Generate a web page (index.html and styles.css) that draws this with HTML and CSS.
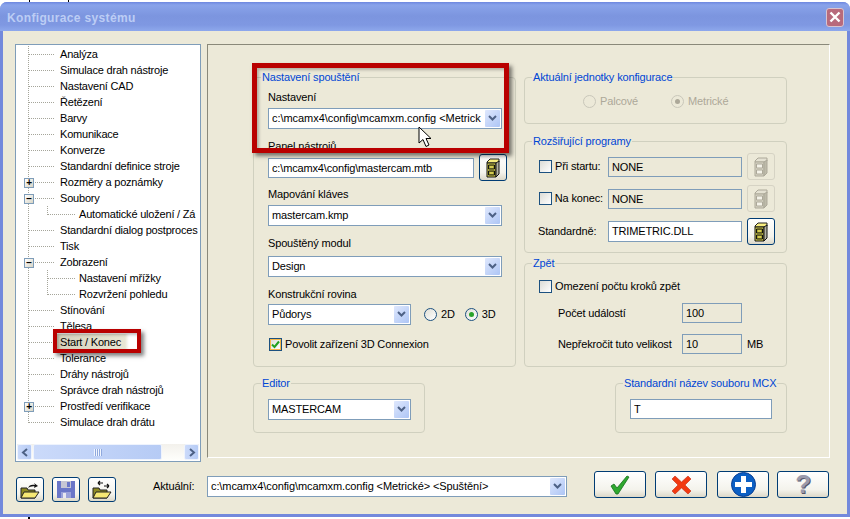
FILE: index.html
```html
<!DOCTYPE html>
<html lang="cs">
<head>
    <meta charset="UTF-8">
    <meta name="viewport" content="width=device-width, initial-scale=1.0">
    <title>Konfigurace systému</title>
    <link rel="stylesheet" href="styles.css">
</head>
<body>
    <!-- Shared icons -->
    <svg class="icon-defs" width="0" height="0">
        <symbol id="cabinet" viewBox="0 0 16 20">
            <path d="M5 1h9v3l-2 1H2V4z" fill="#f8ee80" stroke="#222"/>
            <path d="M2 5h9v14H2z" fill="#dcd650" stroke="#111"/>
            <path d="M11 5l3-2v13l-3 3z" fill="#b4b3a4" stroke="#111"/>
            <path d="M3.500 7h6v4h-6zM3.500 13h6v4h-6z" fill="#a8a52c" stroke="#111"/>
            <path d="M5 8.500h3v1H5zM5 14.500h3v1H5z" fill="#fff27a"/>
        </symbol>
        <symbol id="cabinet-off" viewBox="0 0 16 20">
            <path d="M5 1h9v3l-2 1H2V4z" fill="#e4e1d2" stroke="#aca899"/>
            <path d="M2 5h9v14H2z" fill="#d8d5c5" stroke="#aca899"/>
            <path d="M11 5l3-2v13l-3 3z" fill="#bdbaa9" stroke="#aca899"/>
            <path d="M3.500 7h6v4h-6zM3.500 13h6v4h-6z" fill="#f4f2e8" stroke="#aca899"/>
        </symbol>
        <symbol id="folder" viewBox="0 0 22 20">
            <path d="M2 8h6l1 2h7v8H2z" fill="#8e8a24" stroke="#222"/>
            <path d="M2 18l3-6h15l-4 6z" fill="#f6e874" stroke="#222"/>
        </symbol>
    </svg>

    <div class="window">
        <div class="titlebar">
            <span class="title-text">Konfigurace systému</span>
            <span class="close-btn">
                <svg width="12" height="12" viewBox="0 0 12 12"><path d="M1.500 1.500l9 9M10.500 1.500l-9 9" stroke="#fff" stroke-width="2.400"/></svg>
            </span>
        </div>

        <div class="client">
            <div class="top-row">
                <!-- Tree -->
                <div class="tree">
                    <ul class="tree-list">
                        <li class="row">Analýza</li>
                        <li class="row">Simulace drah nástroje</li>
                        <li class="row">Nastavení CAD</li>
                        <li class="row">Řetězení</li>
                        <li class="row">Barvy</li>
                        <li class="row">Komunikace</li>
                        <li class="row">Konverze</li>
                        <li class="row">Standardní definice stroje</li>
                        <li class="row"><span class="expander">+</span>Rozměry a poznámky</li>
                        <li class="row"><span class="expander">−</span>Soubory</li>
                        <li class="row sub sub-only">Automatické uložení / Zá</li>
                        <li class="row">Standardní dialog postproces</li>
                        <li class="row">Tisk</li>
                        <li class="row"><span class="expander">−</span>Zobrazení</li>
                        <li class="row sub sub-first">Nastavení mřížky</li>
                        <li class="row sub sub-only">Rozvržení pohledu</li>
                        <li class="row">Stínování</li>
                        <li class="row">Tělesa</li>
                        <li class="row row-marked">Start / Konec</li>
                        <li class="row">Tolerance</li>
                        <li class="row">Dráhy nástrojů</li>
                        <li class="row">Správce drah nástrojů</li>
                        <li class="row"><span class="expander">+</span>Prostředí verifikace</li>
                        <li class="row last">Simulace drah drátu</li>
                    </ul>
                    <div class="scrollbar">
                        <span class="sb-btn"><svg width="8" height="9" viewBox="0 0 8 9"><path d="M6 1L2 4.500 6 8" fill="none" stroke="#4d6185" stroke-width="2"/></svg></span>
                        <span class="sb-thumb"><span class="grip"></span></span>
                        <span class="sb-track"></span>
                        <span class="sb-btn"><svg width="8" height="9" viewBox="0 0 8 9"><path d="M2 1l4 3.500L2 8" fill="none" stroke="#4d6185" stroke-width="2"/></svg></span>
                    </div>
                </div>

                <!-- Settings panel -->
                <div class="panel">
                    <div class="columns">
                        <fieldset class="group group-start">
                            <legend>Nastavení spouštění</legend>
                            <div class="lbl lbl-first">Nastavení</div>
                            <div class="combo"><span class="combo-text">c:\mcamx4\config\mcamxm.config &lt;Metrick</span><span class="arrow"></span></div>
                            <div class="lbl lbl-toolbar">Panel nástrojů</div>
                            <div class="browse-row">
                                <div class="textbox textbox-path">c:\mcamx4\config\mastercam.mtb</div>
                                <span class="btn browse"><svg width="16" height="20"><use href="#cabinet"/></svg></span>
                            </div>
                            <div class="lbl lbl-keys">Mapování kláves</div>
                            <div class="combo">mastercam.kmp<span class="arrow"></span></div>
                            <div class="lbl lbl-module">Spouštěný modul</div>
                            <div class="combo">Design<span class="arrow"></span></div>
                            <div class="lbl lbl-plane">Konstrukční rovina</div>
                            <div class="plane-row">
                                <div class="combo combo-short">Půdorys<span class="arrow"></span></div>
                                <span class="radio-item radio-2d"><span class="radio"></span>2D</span>
                                <span class="radio-item"><span class="radio on"></span>3D</span>
                            </div>
                            <div class="check-row check-3d"><span class="checkbox checked"><svg width="11" height="11" viewBox="0 0 11 11"><path d="M2 5.500l2.500 2.500L9 2.500" fill="none" stroke="#21a121" stroke-width="2"/></svg></span>Povolit zařízení 3D Connexion</div>
                        </fieldset>

                        <div class="stack">
                            <fieldset class="group group-units">
                                <legend>Aktuální jednotky konfigurace</legend>
                                <div class="units-row">
                                    <span class="radio-item off radio-wide"><span class="radio"></span>Palcové</span>
                                    <span class="radio-item off"><span class="radio on"></span>Metrické</span>
                                </div>
                            </fieldset>
                            <fieldset class="group group-ext">
                                <legend>Rozšiřující programy</legend>
                                <div class="ext-row ext-row-start">
                                    <div class="check-row ext-label"><span class="checkbox"></span>Při startu:</div>
                                    <div class="textbox ext-input disabled">NONE</div>
                                    <span class="btn browse btn-off"><svg width="16" height="20"><use href="#cabinet-off"/></svg></span>
                                </div>
                                <div class="ext-row">
                                    <div class="check-row ext-label"><span class="checkbox"></span>Na konec:</div>
                                    <div class="textbox ext-input disabled">NONE</div>
                                    <span class="btn browse btn-off"><svg width="16" height="20"><use href="#cabinet-off"/></svg></span>
                                </div>
                                <div class="ext-row ext-row-last">
                                    <div class="ext-label ext-label-plain">Standardně:</div>
                                    <div class="textbox ext-input">TRIMETRIC.DLL</div>
                                    <span class="btn browse"><svg width="16" height="20"><use href="#cabinet"/></svg></span>
                                </div>
                            </fieldset>
                            <fieldset class="group group-undo">
                                <legend>Zpět</legend>
                                <div class="check-row check-undo"><span class="checkbox"></span>Omezení počtu kroků zpět</div>
                                <div class="undo-grid">
                                    <span>Počet událostí</span>
                                    <div class="textbox disabled">100</div>
                                    <span></span>
                                    <span>Nepřekročit tuto velikost</span>
                                    <div class="textbox disabled">10</div>
                                    <span>MB</span>
                                </div>
                            </fieldset>
                        </div>
                    </div>

                    <div class="lower-groups">
                        <fieldset class="group group-small">
                            <legend>Editor</legend>
                            <div class="combo combo-short small-control">MASTERCAM<span class="arrow"></span></div>
                        </fieldset>
                        <fieldset class="group group-small">
                            <legend>Standardní název souboru MCX</legend>
                            <div class="textbox small-control textbox-name">T</div>
                        </fieldset>
                    </div>
                </div>
            </div>

            <!-- Bottom bar -->
            <div class="bottom-bar">
                <div class="file-btns">
                    <span class="btn file-btn">
                        <svg width="22" height="20" viewBox="0 0 22 20"><use href="#folder"/><path d="M9 8c1-3 4-4 7-3l-1-2 4 3-4 2 .5-1.500C13 6 11 7 9 8z" fill="#111"/></svg>
                    </span>
                    <span class="btn file-btn">
                        <svg width="20" height="19" viewBox="0 0 20 19"><path d="M1 1h18v17H1z" fill="#6a76c8"/><path d="M5 1h10v7H5z" fill="#c6c6d4"/><path d="M5 12h10v6H5z" fill="#9ba2da"/><path d="M11 2h3v5h-3z" fill="#6a76c8"/><path d="M7 13h3v5H7z" fill="#e8e8f0"/></svg>
                    </span>
                    <span class="btn file-btn">
                        <svg width="22" height="20" viewBox="0 0 22 20"><use href="#folder"/><path d="M7 3h5M7 3l2-2M7 3l2 2M13 6h5m0 0l-2-2m2 2l-2 2" fill="none" stroke="#111" stroke-width="1.200"/></svg>
                    </span>
                </div>
                <div class="current-label">Aktuální:</div>
                <div class="combo combo-current">c:\mcamx4\config\mcamxm.config &lt;Metrické&gt; &lt;Spuštění&gt;<span class="arrow"></span></div>
                <div class="action-btns">
                    <span class="btn action">
                        <svg width="20" height="20" viewBox="0 0 20 20"><path d="M1 11l3-2 3 4L17 1l2 1L8 19H6z" fill="#2fa82f" stroke="#14701a" stroke-width=".8"/></svg>
                    </span>
                    <span class="btn action">
                        <svg width="21" height="20" viewBox="0 0 21 20"><path d="M1 4l3-3 6.500 6L17 1l3 3-6 6 6 6-3 3-6.500-6L4 19l-3-3 6-6z" fill="#f23a12" stroke="#c42a10" stroke-width=".6"/></svg>
                    </span>
                    <span class="btn action action-plus">
                        <svg width="25" height="25" viewBox="0 0 25 25"><circle cx="12.500" cy="12.500" r="12" fill="#0b5fc4" stroke="#0a3f93"/><path d="M10 4h5v6h6v5h-6v6h-5v-6H4v-5h6z" fill="#fff"/></svg>
                    </span>
                    <span class="btn action action-help"><span class="help-mark">?</span></span>
                </div>
            </div>
        </div>
    </div>

    <!-- Annotations on top of the screenshot -->
    <div class="mark mark-tree"></div>
    <div class="mark mark-start"></div>
    <svg class="cursor" width="14" height="22" viewBox="0 0 14 22">
        <path d="M1 1v16l4-3.500 3 7 3-1.500-3-6.500h5z" fill="#fff" stroke="#000"/>
    </svg>
</body>
</html>
```

FILE: styles.css
```css
* {
    margin: 0;
    padding: 0;
    box-sizing: border-box;
}

body {
    position: relative;
    width: 850px;
    height: 519px;
    overflow: hidden;
    padding-top: 2px;
    font-family: "Liberation Sans", Arial, sans-serif;
    font-size: 11px;
    letter-spacing: -0.15px;
    line-height: 13px;
    color: #000;
    background:
        linear-gradient(#000, #000) no-repeat 29px 0 / 1px 2px,
        linear-gradient(#000, #000) no-repeat 68px 0 / 1px 2px,
        linear-gradient(#000, #000) no-repeat 28px 517px / 2px 2px,
        #fff;
}

.icon-defs {
    display: block;
    height: 0;
}

/* Window frame */
.window {
    height: 515px;
    border-radius: 7px 7px 0 0;
    background: #7389dc;
    padding: 0 3px 3px;
    display: flex;
    flex-direction: column;
}

.titlebar {
    height: 29px;
    margin: 0 -3px;
    padding: 1px 6px 0 7px;
    border-radius: 7px 7px 0 0;
    background: linear-gradient(#6d87e0 0, #89a3ea 3px, #7c95df 14px, #7f98e2 23px, #8ea8ec 29px);
    display: flex;
    align-items: center;
    justify-content: space-between;
}

.title-text {
    margin-top: 2px;
    font-size: 12px;
    font-weight: bold;
    letter-spacing: 0.35px;
    color: #bccdf5;
}

.close-btn {
    width: 18px;
    height: 19px;
    border: 1px solid #d8c4d0;
    border-radius: 3px;
    background: #b86a7c;
    display: flex;
    align-items: center;
    justify-content: center;
}

.client {
    flex: 1;
    background: #ece9d8;
    padding: 13px 17px 0 12px;
}

.top-row {
    display: flex;
    gap: 6px;
    align-items: flex-start;
}

/* Tree */
.tree {
    width: 186px;
    height: 418px;
    border: 1px solid #7f9db9;
    background: #fff;
    display: flex;
    flex-direction: column;
    justify-content: space-between;
    overflow: hidden;
}

.tree-list {
    list-style: none;
    padding-top: 1px;
    letter-spacing: -0.2px;
}

.row {
    --dots-h: repeating-linear-gradient(90deg, #a5a59a 0 1px, transparent 1px 2px);
    --dots-v: repeating-linear-gradient(#a5a59a 0 1px, transparent 1px 2px);
    position: relative;
    height: 16px;
    line-height: 16px;
    padding-left: 44px;
    white-space: nowrap;
    overflow: hidden;
    background:
        var(--dots-h) no-repeat 13px 8px / 26px 1px,
        var(--dots-v) no-repeat 12px 0 / 1px 16px;
}

.row.last {
    background:
        var(--dots-h) no-repeat 13px 8px / 26px 1px,
        var(--dots-v) no-repeat 12px 0 / 1px 9px;
}

.row.sub {
    padding-left: 63px;
    background:
        var(--dots-h) no-repeat 32px 8px / 27px 1px,
        var(--dots-v) no-repeat 31px 0 / 1px 16px,
        var(--dots-v) no-repeat 12px 0 / 1px 16px;
}

.row.sub-only {
    background:
        var(--dots-h) no-repeat 32px 8px / 27px 1px,
        var(--dots-v) no-repeat 31px 0 / 1px 9px,
        var(--dots-v) no-repeat 12px 0 / 1px 16px;
}

.row.row-marked {
    background:
        linear-gradient(90deg, #d6d3bd, #e8e6d4 85%, #fff 90%) no-repeat 41px 0 / 80px 16px,
        var(--dots-h) no-repeat 13px 8px / 26px 1px,
        var(--dots-v) no-repeat 12px 0 / 1px 16px;
}

.expander {
    position: absolute;
    left: 8px;
    top: 4px;
    width: 10px;
    height: 10px;
    border: 1px solid #7f9db9;
    background: linear-gradient(135deg, #fff, #d8d5c5);
    font-size: 10px;
    font-weight: bold;
    line-height: 8px;
    text-align: center;
}

.scrollbar {
    height: 16px;
    margin: 0 1px 1px;
    background: linear-gradient(#f3f1ec, #fefefb);
    display: flex;
    gap: 1px;
}

.sb-btn,
.sb-thumb {
    border: 1px solid #eef3fd;
    border-radius: 2px;
    background: linear-gradient(90deg, #cbdafa, #b6cbf5);
    display: flex;
    align-items: center;
    justify-content: center;
}

.sb-btn {
    width: 15px;
}

.sb-thumb {
    width: 129px;
}

.sb-track {
    flex: 1;
}

.grip {
    width: 8px;
    height: 7px;
    background: repeating-linear-gradient(90deg, #f2f6fe 0 1px, #8fa9de 1px 2px);
}

/* Settings panel */
.panel {
    width: 623px;
    height: 414px;
    border: 1px solid;
    border-color: #8a897a #fff #fff #8a897a;
    padding: 26px 0 0 45px;
}

.columns {
    display: grid;
    grid-template-columns: 263px 263px;
    gap: 8px;
}

.stack {
    display: flex;
    flex-direction: column;
}

.group {
    border: 1px solid #d0d0bf;
    border-radius: 4px;
    padding: 0 0 0 14px;
    min-width: 0;
}

.group legend {
    margin-left: -7px;
    padding: 0 1px;
    line-height: 13px;
    color: #0046d5;
}

.group-start {
    height: 296px;
}

.group-units {
    height: 53px;
}

.group-ext {
    height: 118px;
    margin-top: 11px;
}

.group-undo {
    height: 110px;
    margin-top: 4px;
}

.lower-groups {
    display: flex;
    justify-content: space-between;
    width: 534px;
    margin-top: 10px;
}

.group-small {
    width: 172px;
    height: 56px;
}

.small-control {
    margin-top: 9px;
}

/* Controls */
.lbl {
    height: 13px;
}

.lbl-first {
    margin: 7px 0 4px;
}

.lbl-toolbar {
    margin: 11px 0 1px;
}

.lbl-keys {
    margin: 7px 0 4px;
}

.lbl-module {
    margin: 11px 0 6px;
}

.lbl-plane {
    margin: 11px 0 3px;
}

.combo {
    position: relative;
    width: 234px;
    height: 21px;
    padding: 0 20px 0 3px;
    border: 1px solid #7f9db9;
    background: #fff;
    line-height: 19px;
    white-space: nowrap;
    overflow: hidden;
}

.combo-short {
    width: 143px;
}

.combo-current {
    width: 360px;
    margin-top: 14px;
    letter-spacing: -0.1px;
}

.combo-text {
    display: block;
    overflow: hidden;
    letter-spacing: -0.05px;
}

.arrow {
    position: absolute;
    top: 1px;
    right: 1px;
    bottom: 1px;
    width: 15px;
    border-radius: 1px;
    background:
        url("data:image/svg+xml,%3Csvg xmlns='http://www.w3.org/2000/svg' width='9' height='7'%3E%3Cpath d='M1 1l3.500 3.500L8 1' fill='none' stroke='%234d6185' stroke-width='2'/%3E%3C/svg%3E") no-repeat center,
        linear-gradient(135deg, #dfe8fd, #adc5f5);
}

.textbox {
    height: 20px;
    padding: 0 3px;
    border: 1px solid #7f9db9;
    background: #fff;
    line-height: 18px;
    white-space: nowrap;
    align-self: center;
}

.textbox.disabled {
    background: #ece9d8;
}

.textbox-path {
    width: 206px;
}

.textbox-name {
    width: 142px;
}

.browse-row {
    display: flex;
    align-items: center;
    gap: 5px;
}

.btn {
    border: 1px solid #003c74;
    border-radius: 3px;
    background: linear-gradient(#fff, #f4f3ec 70%, #dcd8c8);
    display: flex;
    align-items: center;
    justify-content: center;
}

.browse {
    width: 28px;
    height: 27px;
}

.btn-off {
    border-color: #d6d3c4;
    background: #ece9d8;
}

.plane-row {
    display: flex;
    align-items: center;
}

.radio-item {
    display: inline-flex;
    align-items: center;
    gap: 4px;
}

.radio-2d {
    margin: 0 10px 0 13px;
}

.radio {
    position: relative;
    width: 13px;
    height: 13px;
    border: 1px solid #1c5180;
    border-radius: 50%;
    background: linear-gradient(135deg, #e0dfd6, #fff);
}

.radio.on::after {
    content: "";
    position: absolute;
    left: 3px;
    top: 3px;
    width: 5px;
    height: 5px;
    border-radius: 50%;
    background: #2aa32a;
}

.radio-item.off {
    color: #aca899;
}

.radio-item.off .radio {
    border-color: #c9c7ba;
    background: #ece9d8;
}

.radio-item.off .radio.on::after {
    background: #aca899;
}

.units-row {
    display: flex;
    margin: 11px 0 0 44px;
}

.radio-wide {
    width: 88px;
}

.check-row {
    display: flex;
    align-items: center;
    gap: 3px;
    white-space: nowrap;
}

.check-3d {
    margin: 13px 0 0 1px;
}

.checkbox {
    width: 13px;
    height: 13px;
    border: 1px solid #1c5180;
    background: linear-gradient(135deg, #dcdcd6, #fff);
    display: flex;
    align-items: center;
    justify-content: center;
}

.checkbox.checked {
    box-shadow: inset 0 0 0 1px #f6b84a;
}

.ext-row {
    display: flex;
    align-items: center;
    height: 27px;
    gap: 5px;
    margin-top: 5px;
}

.ext-row-last {
    margin-top: 6px;
}

.ext-label {
    width: 64px;
}

.ext-label-plain {
    margin-left: -1px;
    margin-right: 1px;
}

.ext-input {
    width: 134px;
}

.ext-row-last .ext-input {
    height: 21px;
}

.check-undo {
    margin-top: 10px;
}

.undo-grid {
    display: grid;
    grid-template-columns: 124px 60px auto;
    grid-auto-rows: 20px;
    column-gap: 0;
    row-gap: 11px;
    margin: 10px 0 0 19px;
    align-items: center;
}

.undo-grid span:last-child {
    margin-left: 5px;
}

/* Bottom bar */
.bottom-bar {
    display: flex;
    align-items: flex-start;
}

.file-btns {
    display: flex;
    gap: 8px;
    margin: 15px 0 0 1px;
}

.file-btn {
    width: 28px;
    height: 25px;
}

.current-label {
    width: 54px;
    margin: 18px 0 0 37px;
}

.action-btns {
    display: flex;
    gap: 9px;
    margin: 9px 0 0 27px;
}

.action {
    width: 52px;
    height: 27px;
}

.action-plus {
    margin-left: 1px;
    overflow: visible;
}

.action-help {
    margin-left: -1px;
}

.help-mark {
    font-size: 26px;
    font-weight: bold;
    line-height: 25px;
    color: #9a9aac;
    text-shadow: 1px 1px 0 #55556a;
}

/* Red annotations */
.mark {
    position: absolute;
    border-style: solid;
    border-color: #b90000;
    box-shadow: 3px 3px 4px rgba(0, 0, 0, 0.5), inset 2px 2px 3px rgba(0, 0, 0, 0.25);
}

.mark-tree {
    left: 252px;
    top: 63px;
    width: 257px;
    height: 90px;
    border-width: 5px;
}

.mark-start {
    left: 53px;
    top: 329px;
    width: 88px;
    height: 24px;
    border-width: 4px;
}

.cursor {
    position: absolute;
    left: 418px;
    top: 126px;
}
```
